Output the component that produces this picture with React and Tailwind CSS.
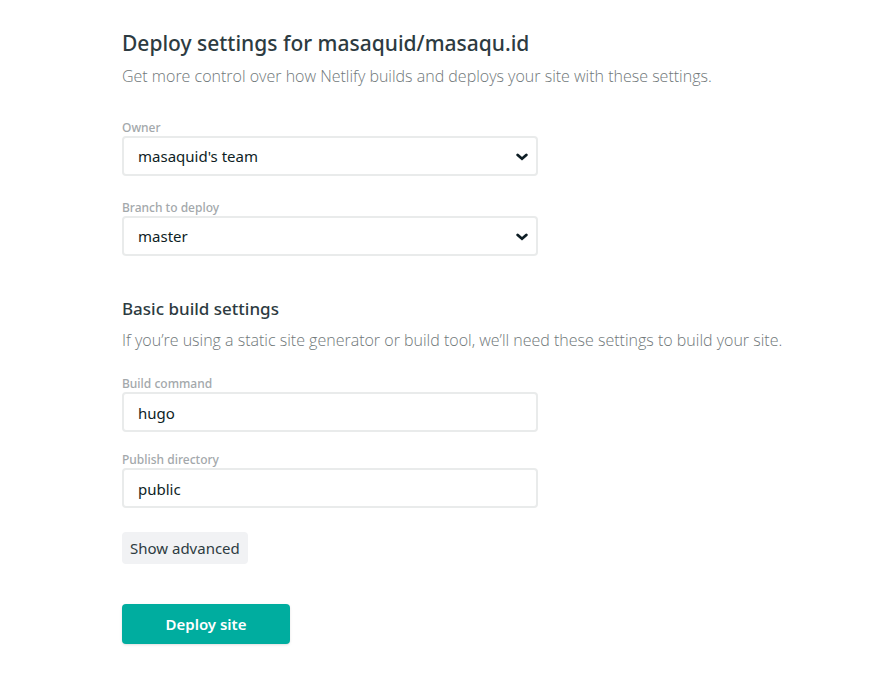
const field =
  "block h-10 w-full appearance-none rounded border-2 border-[#e9ebeb] bg-white px-3.5 pt-px text-[15px] text-[#0e1e25] outline-none focus:border-[#00ad9f]";
const label = "block text-[12px] leading-4 font-medium text-[#a3a8ab]";
const intro = "-mr-20 pt-px font-['Open_Sans',sans-serif] text-[16px] leading-8 font-light text-[#6f7779]";

function SelectField({ id, title, value }) {
  return (
    <div>
      <label htmlFor={id} className={label}>{title}</label>
      <div className="relative">
        <select id={id} className={field} defaultValue={value}>
          <option>{value}</option>
        </select>
        <svg
          className="pointer-events-none absolute top-4 right-2.5 h-2.5 w-3"
          viewBox="0 0 12 10"
          fill="none"
          stroke="#0e1e25"
          strokeWidth="2.8"
          strokeLinecap="round"
          aria-hidden="true"
        >
          <path d="M1.7 3 6 6.7 10.3 3" />
        </svg>
      </div>
    </div>
  );
}

function TextField({ id, title, value }) {
  return (
    <div>
      <label htmlFor={id} className={label}>{title}</label>
      <input id={id} type="text" className={field} defaultValue={value} />
    </div>
  );
}

export default function App() {
  return (
    <main className="min-h-screen bg-white px-[122px] pt-[27px] pb-7 font-['Noto_Sans',sans-serif] text-[16px] text-[#2d3b41]">
      <form onSubmit={(e) => e.preventDefault()}>
        <h1 className="text-[21px] leading-8 font-medium">Deploy settings for masaquid/masaqu.id</h1>
        <p className={intro}>
          Get more control over how Netlify builds and deploys your site with these settings.
        </p>
        <div className="mt-7 max-w-[416px] space-y-6">
          <SelectField id="owner" title="Owner" value="masaquid's team" />
          <SelectField id="branch" title="Branch to deploy" value="master" />
        </div>
        <h2 className="mt-[39px] text-[17px] leading-7 font-medium">Basic build settings</h2>
        <p className={intro}>
          If you’re using a static site generator or build tool, we’ll need these settings to build your site.
        </p>
        <div className="mt-5 max-w-[416px] space-y-5">
          <TextField id="command" title="Build command" value="hugo" />
          <TextField id="directory" title="Publish directory" value="public" />
        </div>
        <button type="button" className="mt-6 block h-8 rounded bg-[#f1f2f4] px-2 text-[15px]">
          Show advanced
        </button>
        <button type="submit" className="mt-10 block h-10 w-[168px] rounded bg-[#00ad9f] text-[15px] font-semibold text-white shadow-sm">
          Deploy site
        </button>
      </form>
    </main>
  );
}
